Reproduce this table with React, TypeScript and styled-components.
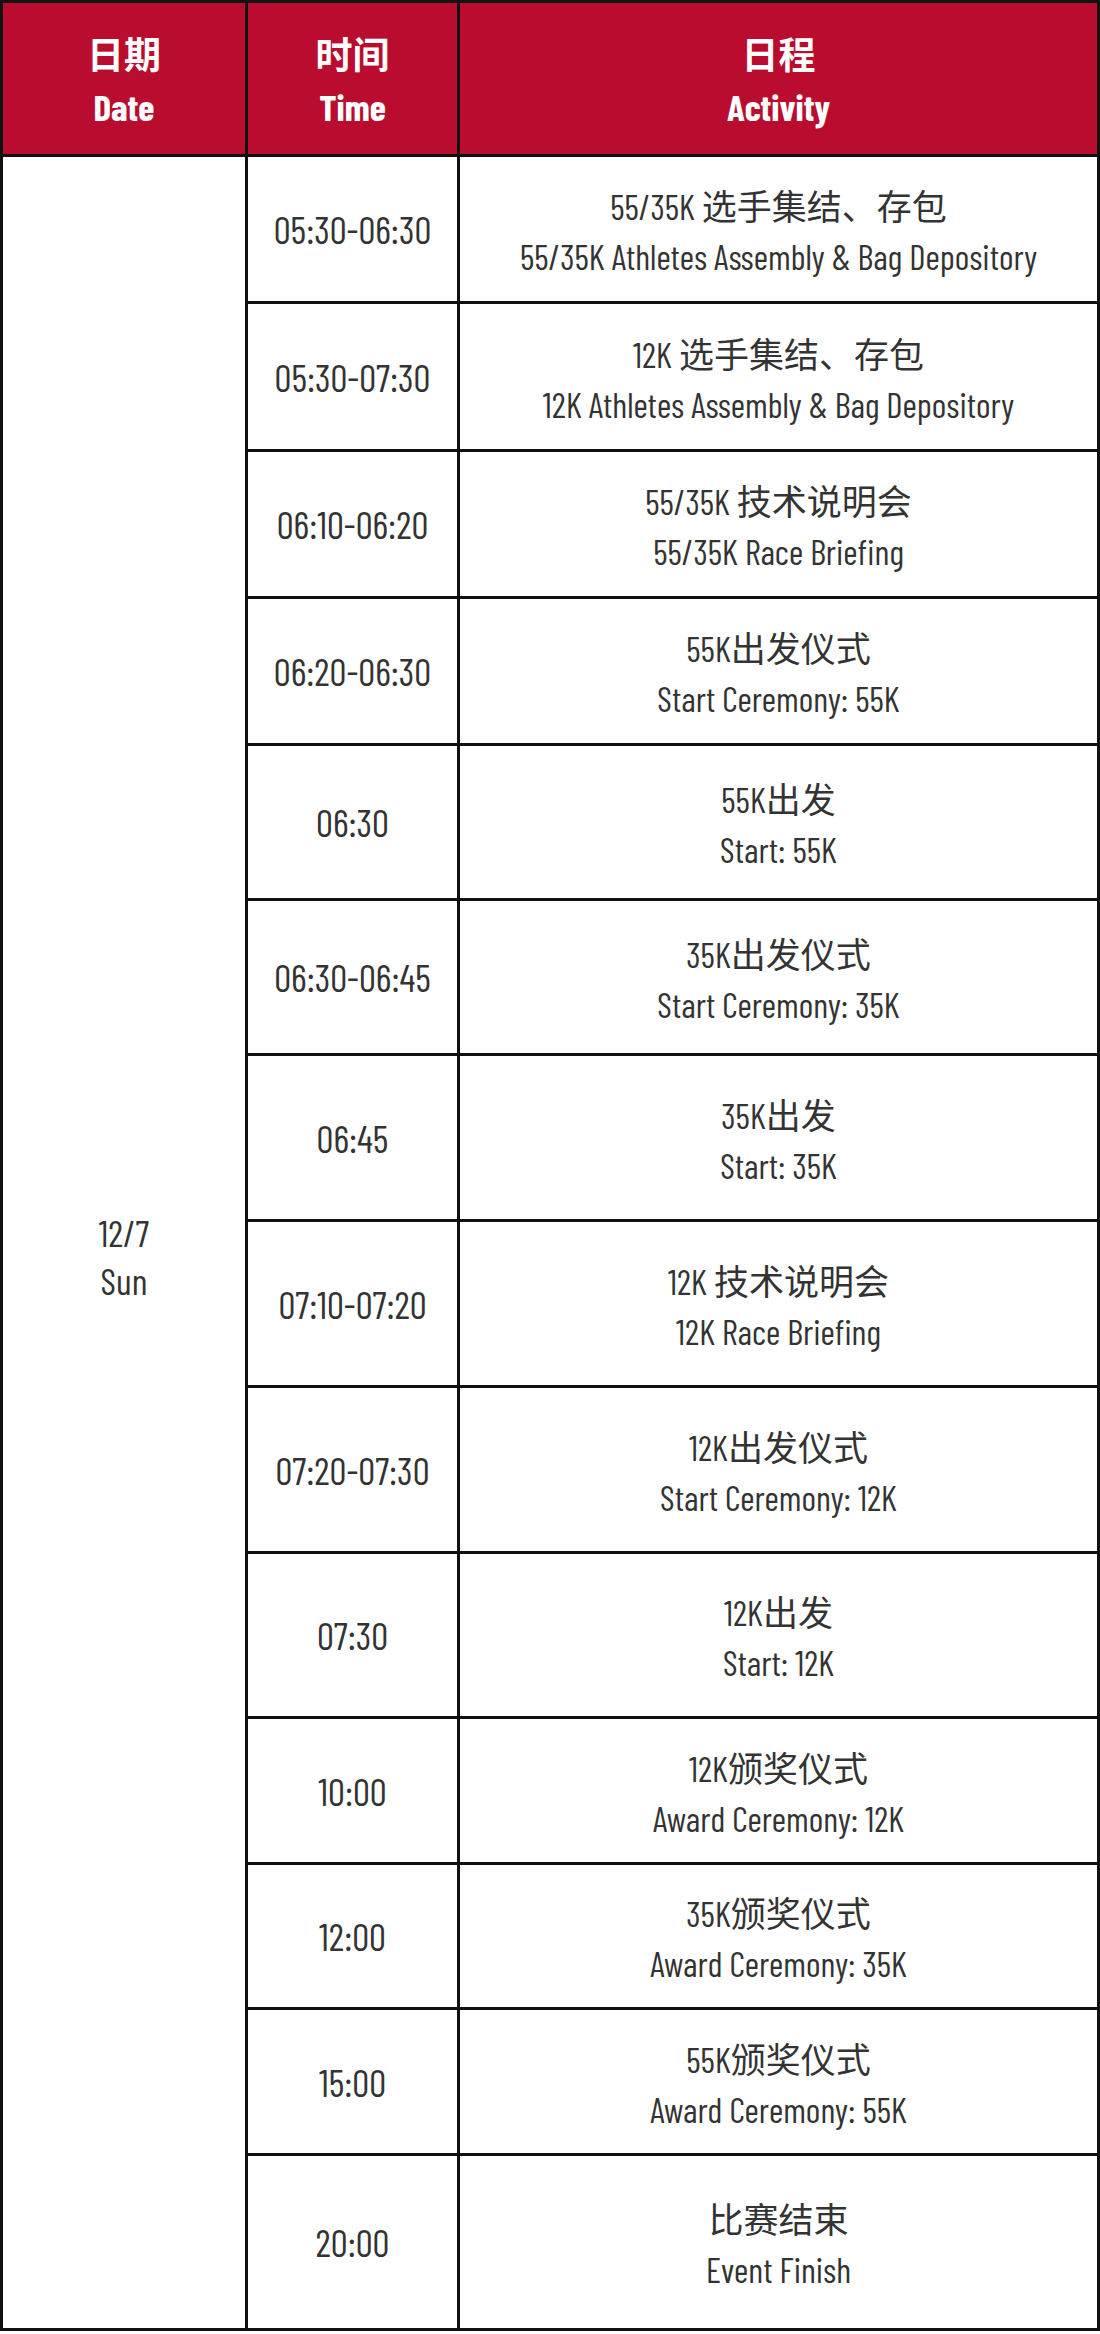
import React from 'react'
import styled, { createGlobalStyle } from 'styled-components'

const GlobalStyle = createGlobalStyle`
  html, body {
    margin: 0;
    padding: 0;
    background: #ffffff;
  }
`

const fontStack = `"Barlow Condensed", "Noto Sans CJK SC", sans-serif`

interface Item {
  time: string
  zh: string
  en: string
  h: number
}

const items: Item[] = [
  { time: '05:30-06:30', zh: '55/35K 选手集结、存包', en: '55/35K Athletes Assembly & Bag Depository', h: 144 },
  { time: '05:30-07:30', zh: '12K 选手集结、存包', en: '12K Athletes Assembly & Bag Depository', h: 145 },
  { time: '06:10-06:20', zh: '55/35K 技术说明会', en: '55/35K Race Briefing', h: 144 },
  { time: '06:20-06:30', zh: '55K出发仪式', en: 'Start Ceremony: 55K', h: 144 },
  { time: '06:30', zh: '55K出发', en: 'Start: 55K', h: 152 },
  { time: '06:30-06:45', zh: '35K出发仪式', en: 'Start Ceremony: 35K', h: 152 },
  { time: '06:45', zh: '35K出发', en: 'Start: 35K', h: 163 },
  { time: '07:10-07:20', zh: '12K 技术说明会', en: '12K Race Briefing', h: 163 },
  { time: '07:20-07:30', zh: '12K出发仪式', en: 'Start Ceremony: 12K', h: 163 },
  { time: '07:30', zh: '12K出发', en: 'Start: 12K', h: 162 },
  { time: '10:00', zh: '12K颁奖仪式', en: 'Award Ceremony: 12K', h: 143 },
  { time: '12:00', zh: '35K颁奖仪式', en: 'Award Ceremony: 35K', h: 142 },
  { time: '15:00', zh: '55K颁奖仪式', en: 'Award Ceremony: 55K', h: 143 },
  { time: '20:00', zh: '比赛结束', en: 'Event Finish', h: 172 },
]

const Schedule = styled.div<{ $rows: string }>`
  display: grid;
  grid-template-columns: 242px 209px 637px;
  grid-template-rows: ${p => p.$rows};
  gap: 3px;
  padding: 3px;
  background: #111111;
  width: 1100px;
  box-sizing: border-box;
  font-family: ${fontStack};
`

const HeadCell = styled.div`
  background: #ba0c2f;
  color: #ffffff;
  font-weight: 700;
  font-size: 37px;
  line-height: 52px;
  display: flex;
  flex-direction: column;
  align-items: center;
  justify-content: center;
  padding-top: 2px;
`

const Cell = styled.div`
  background: #ffffff;
  color: #333333;
  font-weight: 400;
  display: flex;
  flex-direction: column;
  align-items: center;
  justify-content: center;
  text-align: center;
  white-space: nowrap;
`

const DateCell = styled(Cell)<{ $span: number }>`
  grid-row: 2 / span ${p => p.$span};
  grid-column: 1;
  font-size: 37px;
  line-height: 48px;
  padding-top: 26px;
`

const TimeCell = styled(Cell)`
  font-size: 38px;
  line-height: 44px;
`

const ActivityCell = styled(Cell)`
  font-size: 35px;
  line-height: 50px;
  padding-top: 4px;
`

export default function App() {
  const rows = ['151px', ...items.map(i => `${i.h}px`)].join(' ')
  return (
    <>
      <GlobalStyle />
      <Schedule $rows={rows}>
        <HeadCell>
          <span>日期</span>
          <span>Date</span>
        </HeadCell>
        <HeadCell>
          <span>时间</span>
          <span>Time</span>
        </HeadCell>
        <HeadCell>
          <span>日程</span>
          <span>Activity</span>
        </HeadCell>
        <DateCell $span={items.length}>
          <span>12/7</span>
          <span>Sun</span>
        </DateCell>
        {items.map(item => (
          <React.Fragment key={item.time + item.en}>
            <TimeCell>{item.time}</TimeCell>
            <ActivityCell>
              <span>{item.zh}</span>
              <span>{item.en}</span>
            </ActivityCell>
          </React.Fragment>
        ))}
      </Schedule>
    </>
  )
}
